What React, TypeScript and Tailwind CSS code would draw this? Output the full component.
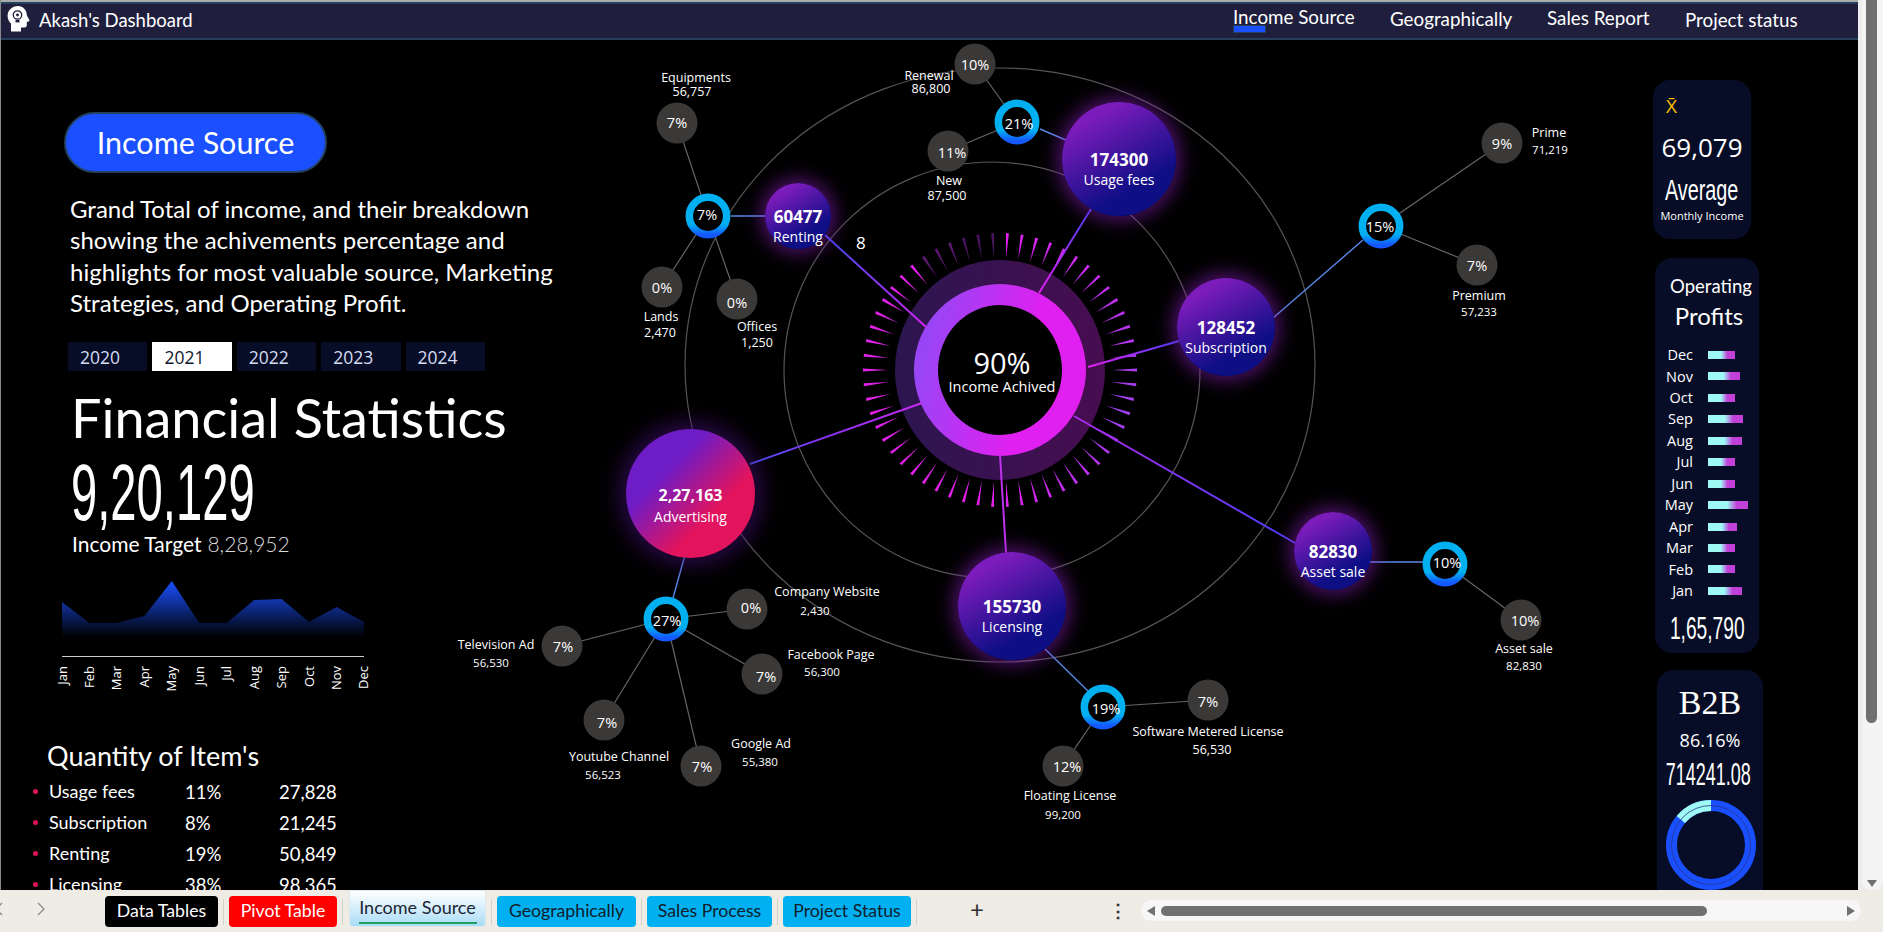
import React from "react";

const years = ["2020", "2021", "2022", "2023", "2024"];
const months = ["Jan", "Feb", "Mar", "Apr", "May", "Jun", "Jul", "Aug", "Sep", "Oct", "Nov", "Dec"];
const areaY = [603, 624, 624, 617, 582, 624, 624, 601, 600, 623, 608, 623];

const items = [
  { name: "Usage fees", pct: "11%", qty: "27,828" },
  { name: "Subscription", pct: "8%", qty: "21,245" },
  { name: "Renting", pct: "19%", qty: "50,849" },
  { name: "Licensing", pct: "38%", qty: "98,365" },
];

const profits = [
  { m: "Dec", w: 27 },
  { m: "Nov", w: 32 },
  { m: "Oct", w: 27 },
  { m: "Sep", w: 35 },
  { m: "Aug", w: 34 },
  { m: "Jul", w: 27 },
  { m: "Jun", w: 27 },
  { m: "May", w: 40 },
  { m: "Apr", w: 29 },
  { m: "Mar", w: 27 },
  { m: "Feb", w: 27 },
  { m: "Jan", w: 34 },
];

// diagram data, coordinates are page pixels
const bubbles = [
  { x: 798, y: 216, r: 33, value: "60477", label: "Renting" },
  { x: 1119, y: 159, r: 57, value: "174300", label: "Usage fees" },
  { x: 1226, y: 327, r: 49, value: "128452", label: "Subscription" },
  { x: 1012, y: 606, r: 54, value: "155730", label: "Licensing" },
  { x: 1333, y: 551, r: 39, value: "82830", label: "Asset sale" },
];

const rings = [
  { x: 1017, y: 122, t: "21%", tx: 1019, ty: 124 },
  { x: 708, y: 216, t: "7%", tx: 707, ty: 215 },
  { x: 1381, y: 226, t: "15%", tx: 1380, ty: 227 },
  { x: 666, y: 619, t: "27%", tx: 667, ty: 621 },
  { x: 1445, y: 564, t: "10%", tx: 1447, ty: 563 },
  { x: 1103, y: 707, t: "19%", tx: 1106, ty: 709 },
];

const dots = [
  { x: 975, y: 64, t: "10%", tx: 975, ty: 65, from: 0 },
  { x: 948, y: 151, t: "11%", tx: 952, ty: 153, from: 0 },
  { x: 677, y: 123, t: "7%", tx: 677, ty: 123, from: 1 },
  { x: 662, y: 287, t: "0%", tx: 662, ty: 288, from: 1 },
  { x: 737, y: 299, t: "0%", tx: 737, ty: 303, from: 1 },
  { x: 1502, y: 143, t: "9%", tx: 1502, ty: 144, from: 2 },
  { x: 1477, y: 265, t: "7%", tx: 1477, ty: 266, from: 2 },
  { x: 747, y: 609, t: "0%", tx: 751, ty: 608, from: 3 },
  { x: 562, y: 646, t: "7%", tx: 563, ty: 647, from: 3 },
  { x: 762, y: 674, t: "7%", tx: 766, ty: 677, from: 3 },
  { x: 604, y: 720, t: "7%", tx: 607, ty: 723, from: 3 },
  { x: 701, y: 766, t: "7%", tx: 702, ty: 767, from: 3 },
  { x: 1521, y: 620, t: "10%", tx: 1525, ty: 621, from: 4 },
  { x: 1208, y: 700, t: "7%", tx: 1208, ty: 702, from: 5 },
  { x: 1063, y: 766, t: "12%", tx: 1067, ty: 767, from: 5 },
];

const labels = [
  { x: 696, y: 78, t: "Equipments", nx: 692, ny: 92, n: "56,757", big: true },
  { x: 929, y: 76, t: "Renewal", nx: 931, ny: 89, n: "86,800", big: true },
  { x: 949, y: 181, t: "New", nx: 947, ny: 196, n: "87,500", big: true },
  { x: 661, y: 317, t: "Lands", nx: 660, ny: 333, n: "2,470", big: true },
  { x: 757, y: 327, t: "Offices", nx: 757, ny: 343, n: "1,250", big: true },
  { x: 1549, y: 133, t: "Prime", nx: 1550, ny: 150, n: "71,219", big: false },
  { x: 1479, y: 296, t: "Premium", nx: 1479, ny: 312, n: "57,233", big: false },
  { x: 827, y: 592, t: "Company Website", nx: 815, ny: 611, n: "2,430", big: false },
  { x: 831, y: 655, t: "Facebook Page", nx: 822, ny: 672, n: "56,300", big: false },
  { x: 761, y: 744, t: "Google Ad", nx: 760, ny: 762, n: "55,380", big: false },
  { x: 619, y: 757, t: "Youtube Channel", nx: 603, ny: 775, n: "56,523", big: false },
  { x: 496, y: 645, t: "Television Ad", nx: 491, ny: 663, n: "56,530", big: false },
  { x: 1208, y: 732, t: "Software Metered License", nx: 1212, ny: 750, n: "56,530", big: true },
  { x: 1070, y: 796, t: "Floating License", nx: 1063, ny: 815, n: "99,200", big: false },
  { x: 1524, y: 649, t: "Asset sale", nx: 1524, ny: 666, n: "82,830", big: false },
];

// center -> bubble spokes
const spokes = [
  [926, 327, 825, 235],
  [1039, 293, 1091, 209],
  [1088, 367, 1179, 341],
  [922, 403, 750, 464],
  [1000, 455, 1006, 553],
  [1074, 416, 1295, 543],
];

// bubble -> ring links
const links = [
  [765, 216, 731, 216],
  [1040, 129, 1068, 141],
  [1273, 318, 1363, 240],
  [685, 555, 673, 598],
  [1364, 562, 1423, 562],
  [1045, 649, 1088, 691],
];

const TICKS = 58;

function mix(a: number[], b: number[], t: number) {
  const c = a.map((v, i) => Math.round(v + (b[i] - v) * t));
  return `rgb(${c[0]},${c[1]},${c[2]})`;
}

function tickColor(deg: number) {
  if (deg > 322) return deg > 340 ? "#4a1560" : "#5a1670";
  const magenta = [224, 32, 240];
  const purple = [160, 64, 240];
  if (deg < 110) return mix(magenta, purple, deg / 110);
  if (deg < 180) return mix(purple, magenta, (deg - 110) / 70);
  return mix(magenta, [224, 32, 232], 1);
}

function Ticks() {
  const out = [];
  for (let i = 0; i < TICKS; i++) {
    const deg = ((90 + (i * 360) / TICKS) % 360 + 360) % 360;
    const a = ((deg - 90) * Math.PI) / 180;
    const cos = Math.cos(a);
    const sin = Math.sin(a);
    const x1 = 1000 + cos * 112;
    const y1 = 370 + sin * 112;
    const x2 = 1000 + cos * 137;
    const y2 = 370 + sin * 137;
    const pts = [
      `${x1},${y1}`,
      `${x2 - sin * 1.5},${y2 + cos * 1.5}`,
      `${x2 + sin * 1.5},${y2 - cos * 1.5}`,
    ].join(" ");
    out.push(<polygon key={i} points={pts} fill={tickColor(deg)} />);
  }
  return <>{out}</>;
}

function Squeezed({ children, className }: { children: React.ReactNode; className: string }) {
  return <span className={`inline-block [font-family:'Liberation_Sans',sans-serif] whitespace-nowrap ${className}`}>{children}</span>;
}

function Diagram() {
  return (
    <div className="absolute left-[-1px] top-[-40px] w-[1858px] h-[932px] [font-family:'Open_Sans',sans-serif] text-white">
      <svg className="absolute inset-0" width="1858" height="932" viewBox="0 0 1858 932" fill="none">
        <defs>
          <linearGradient id="spoke" gradientUnits="userSpaceOnUse" x1="1000" y1="370" x2="1300" y2="545">
            <stop offset="0" stopColor="#d026f0" />
            <stop offset="1" stopColor="#4a3ef5" />
          </linearGradient>
          <linearGradient id="spokeA" x1="0" y1="0" x2="1" y2="0">
            <stop offset="0" stopColor="#4a50f0" />
            <stop offset="0.45" stopColor="#8a30f0" />
            <stop offset="1" stopColor="#c82cf0" />
          </linearGradient>
          <linearGradient id="spokeB" x1="0" y1="1" x2="1" y2="0">
            <stop offset="0" stopColor="#e020f0" />
            <stop offset="1" stopColor="#4a3ef5" />
          </linearGradient>
          <linearGradient id="spokeC" x1="1" y1="1" x2="0" y2="0">
            <stop offset="0" stopColor="#d026f0" />
            <stop offset="1" stopColor="#3c48f0" />
          </linearGradient>
          <linearGradient id="core" x1="0" y1="0" x2="1" y2="0.25">
            <stop offset="0.15" stopColor="#9a45f5" />
            <stop offset="0.75" stopColor="#e020f0" />
          </linearGradient>
          <linearGradient id="halo" x1="0" y1="0" x2="1" y2="0">
            <stop offset="0" stopColor="#2c1650" />
            <stop offset="1" stopColor="#470d50" />
          </linearGradient>
          <linearGradient id="ringStroke" x1="0" y1="0" x2="0" y2="1">
            <stop offset="0.72" stopColor="#00b0f0" />
            <stop offset="1" stopColor="#1458ff" />
          </linearGradient>
        </defs>

        <ellipse cx="1000" cy="365" rx="315" ry="297" stroke="#555" strokeWidth="1.2" />
        <circle cx="992" cy="370" r="208" stroke="#555" strokeWidth="1.2" />

        <Ticks />

        {dots.map((d, i) => (
          <line key={i} x1={rings[d.from].x} y1={rings[d.from].y} x2={d.x} y2={d.y} stroke="#666" strokeWidth="1.2" />
        ))}
        {links.map((l, i) => (
          <line key={i} x1={l[0]} y1={l[1]} x2={l[2]} y2={l[3]} stroke="#5a88e8" strokeWidth="1.4" />
        ))}

        <ellipse cx="1000" cy="370" rx="105" ry="110" fill="url(#halo)" />
        <circle cx="1000" cy="370" r="86" fill="url(#core)" />
        <ellipse cx="1000" cy="370" rx="62" ry="65" fill="#000" />

        <line x1={spokes[0][0]} y1={spokes[0][1]} x2={spokes[0][2]} y2={spokes[0][3]} stroke="url(#spokeC)" strokeWidth="2" />
        <line x1={spokes[1][0]} y1={spokes[1][1]} x2={spokes[1][2]} y2={spokes[1][3]} stroke="url(#spokeB)" strokeWidth="2" />
        <line x1={spokes[2][0]} y1={spokes[2][1]} x2={spokes[2][2]} y2={spokes[2][3]} stroke="url(#spokeB)" strokeWidth="2" />
        <line x1={spokes[3][0]} y1={spokes[3][1]} x2={spokes[3][2]} y2={spokes[3][3]} stroke="url(#spokeA)" strokeWidth="2" />
        <line x1={spokes[4][0]} y1={spokes[4][1]} x2={spokes[4][2]} y2={spokes[4][3]} stroke="#c030f0" strokeWidth="2" />
        <line x1={spokes[5][0]} y1={spokes[5][1]} x2={spokes[5][2]} y2={spokes[5][3]} stroke="url(#spoke)" strokeWidth="2" />

        {rings.map((r, i) => (
          <circle key={i} cx={r.x} cy={r.y} r="18.700" fill="#000" stroke="url(#ringStroke)" strokeWidth="7.500" />
        ))}
        {dots.map((d, i) => (
          <circle key={i} cx={d.x} cy={d.y} r="20.500" fill="#3a3938" />
        ))}
      </svg>

      {bubbles.map((b) => (
        <div
          key={b.label}
          className="absolute -translate-x-1/2 -translate-y-1/2 rounded-full flex flex-col items-center justify-center pt-[21px] bg-linear-[150deg,#7d1cbc_18%,#0e0e85_72%] shadow-[0_0_18px_5px_rgba(140,30,190,0.55)]"
          style={{ left: b.x, top: b.y, width: b.r * 2, height: b.r * 2 }}
        >
          <span className="text-[17px] leading-[20px] font-bold">{b.value}</span>
          <span className="text-[14px] leading-[20px] whitespace-nowrap">{b.label}</span>
        </div>
      ))}

      <div className="absolute left-[626px] top-[429px] w-[129px] h-[129px] rounded-full flex flex-col items-center justify-center pt-[24px] bg-linear-[135deg,#6e1cc6_32%,#e2145e_66%] shadow-[0_0_20px_8px_rgba(70,15,120,0.55)]">
        <span className="text-[16px] leading-[22px] font-bold">2,27,163</span>
        <span className="text-[14px] leading-[22px]">Advertising</span>
      </div>

      {rings.map((r) => (
        <span key={r.x} className="absolute -translate-x-1/2 -translate-y-1/2 text-[14.5px]" style={{ left: r.tx, top: r.ty }}>
          {r.t}
        </span>
      ))}
      {dots.map((d) => (
        <span key={d.x} className="absolute -translate-x-1/2 -translate-y-1/2 text-[14.5px]" style={{ left: d.tx, top: d.ty }}>
          {d.t}
        </span>
      ))}
      {labels.map((l) => (
        <React.Fragment key={l.t}>
          <span className="absolute -translate-x-1/2 -translate-y-1/2 text-[12.5px] leading-none whitespace-nowrap" style={{ left: l.x, top: l.y }}>
            {l.t}
          </span>
          <span
            className={`absolute -translate-x-1/2 -translate-y-1/2 leading-none ${l.big ? "text-[12.5px]" : "text-[11.5px]"}`}
            style={{ left: l.nx, top: l.ny }}
          >
            {l.n}
          </span>
        </React.Fragment>
      ))}

      <span className="absolute left-[856px] top-[230px] text-[17px]">8</span>
      <div className="absolute left-[940px] top-[348px] w-[124px] flex flex-col items-center">
        <span className="text-[29px] leading-[30px]">90%</span>
        <span className="text-[14.5px] leading-[18px] whitespace-nowrap">Income Achived</span>
      </div>
    </div>
  );
}

function LeftPanel() {
  const areaPts = areaY.map((y, i) => `${62 + i * 27.45},${y}`).join(" ");
  return (
    <aside className="relative w-[560px] shrink-0 flex flex-col text-white [font-family:Lato,sans-serif] [&>*]:shrink-0">
      <div className="ml-[63px] mt-[72px] w-[263px] h-[61px] rounded-full bg-[#1a50ff] border-2 border-[#24405c] flex items-center justify-center text-[30.5px]">
        Income Source
      </div>
      <p className="ml-[69px] mt-[20px] text-[24px] leading-[31.3px] w-[490px]">
        Grand Total of income, and their breakdown
        <br />
        showing the achivements percentage and
        <br />
        highlights for most valuable source, Marketing
        <br />
        Strategies, and Operating Profit.
      </p>
      <div className="ml-[67px] mt-[24px] flex gap-[5px]">
        {years.map((y) => (
          <div
            key={y}
            className={`w-[79.4px] h-[29px] pl-[12px] flex items-center text-[17.5px] [font-family:'Open_Sans',sans-serif] ${y === "2021" ? "bg-white text-[#10182f]" : "bg-[#070d26] text-[#d4dcf4]"}`}
          >
            {y}
          </div>
        ))}
      </div>
      <h1 className="ml-[70px] mt-[16px] text-[54px] leading-[62px] font-normal whitespace-nowrap">Financial Statistics</h1>
      <Squeezed className="ml-[70px] mt-[11px] text-[80px] leading-[66px] origin-left scale-x-[0.59]">9,20,129</Squeezed>
      <div className="ml-[71px] mt-[3.500px] flex items-baseline gap-[6px]">
        <span className="text-[21px] leading-[28px]">Income Target</span>
        <span className="text-[21px] leading-[28px] font-light text-[#d8d8d8]">8,28,952</span>
      </div>

      <svg className="ml-[49px] mt-[19px]" width="330" height="116" viewBox="50 578 330 116" fill="none">
        <defs>
          <linearGradient id="area" gradientUnits="userSpaceOnUse" x1="0" y1="582" x2="0" y2="638">
            <stop offset="0" stopColor="#1a50ff" />
            <stop offset="1" stopColor="#000" />
          </linearGradient>
        </defs>
        <polygon points={`62,640 ${areaPts} 364,640`} fill="url(#area)" />
        <line x1="62" y1="657.5" x2="364" y2="657.5" stroke="#ccc" strokeWidth="1" />
        {months.map((m, i) => (
          <text
            key={m}
            transform={`translate(${62 + i * 27.45 + 4.5},667) rotate(-90)`}
            textAnchor="end"
            fill="#fff"
            fontSize="13"
            fontFamily="Open Sans, sans-serif"
          >
            {m}
          </text>
        ))}
      </svg>

      <h2 className="ml-[46px] mt-[46px] text-[27px] leading-[34px] font-normal">Quantity of Item's</h2>
      <ul className="mt-[3.500px]">
        {items.map((it) => (
          <li key={it.name} className="flex items-center h-[31px] text-[18px]">
            <span className="ml-[32px] w-[5px] h-[5px] rounded-full bg-[#e0105a]" />
            <span className="ml-[11px] w-[136px]">{it.name}</span>
            <span className="w-[94px] text-[18.5px] pt-[3px]">{it.pct}</span>
            <span className="text-[18.5px] pt-[3px]">{it.qty}</span>
          </li>
        ))}
      </ul>
    </aside>
  );
}

function RightPanel() {
  return (
    <aside className="relative flex flex-col text-white w-[120px] mr-[85px] shrink-0 [font-family:'Open_Sans',sans-serif] [&>*]:shrink-0">
      <div className="mt-[40px] w-[98px] h-[159px] rounded-[17px] bg-[#070d26] flex flex-col items-center">
        <span className="self-start ml-[13px] mt-[14px] text-[19px] leading-[24px] text-[#ffc000]">X̄</span>
        <span className="mt-[11px] text-[26px] leading-[36px]">69,079</span>
        <Squeezed className="mt-[7px] text-[30px] leading-[36px] scale-x-[0.66]">Average</Squeezed>
        <span className="text-[11px] leading-[16px] whitespace-nowrap">Monthly Income</span>
      </div>

      <div className="ml-[2px] mt-[19px] w-[104px] h-[395px] rounded-[17px] bg-[#070d26] flex flex-col items-center">
        <span className="mt-[14px] ml-[8px] text-[18.5px] leading-[28px] whitespace-nowrap [font-family:Lato,sans-serif]">Operating</span>
        <span className="ml-[4px] text-[24px] leading-[32px] [font-family:Lato,sans-serif]">Profits</span>
        <div className="mt-[12.300px] self-start flex flex-col">
          {profits.map((p) => (
            <div key={p.m} className="flex items-center h-[21.45px]">
              <span className="w-[38px] text-right text-[14.5px]">{p.m}</span>
              <span
                className="ml-[15px] h-[8px] bg-linear-[90deg,#9ef9f5_48%,#c040d8_72%]"
                style={{ width: p.w }}
              />
            </div>
          ))}
        </div>
        <Squeezed className="mt-[9.300px] text-[32px] leading-[34px] scale-x-[0.6]">1,65,790</Squeezed>
      </div>

      <div className="ml-[4px] mt-[17px] w-[106px] h-[240px] rounded-t-[17px] bg-[#070d26] flex flex-col items-center">
        <span className="mt-[14px] text-[34px] leading-[38px] [font-family:'Liberation_Serif',serif]">B2B</span>
        <span className="mt-[5px] text-[18px] leading-[26px]">86.16%</span>
        <Squeezed className="mt-[5px] mr-[3px] text-[31px] leading-[34px] scale-x-[0.58]">714241.08</Squeezed>
        <svg className="mt-[7px] ml-[2px] shrink-0" width="92" height="92" viewBox="-46 -46 92 92" fill="none">
          <circle r="39.500" stroke="#1a4fff" strokeWidth="11" />
          <path d="M0 -45 A45 45 0 0 0 -34.4 -29 L-26 -21.9 A34 34 0 0 1 0 -34 Z" fill="#9ef9f5" />
          <circle r="39.500" stroke="#24358c" strokeWidth="0.8" />
        </svg>
      </div>
    </aside>
  );
}

function HeadIcon() {
  return (
    <svg width="23" height="26" viewBox="0 0 23 26" className="ml-[6px] mt-[-5px] shrink-0">
      <path
        d="M11 0C5 0 .6 4.4.6 10c0 3.2 1.3 5.6 3.4 7.4V25.5h10v-4h3.6c1.3 0 2.2-1 2.2-2.2v-3.4l2.2-.7c.5-.2.7-.7.4-1.2l-2.5-4.4C19.900 4 16 0 11 0z"
        fill="#fff"
      />
      <circle cx="10.500" cy="9" r="4.200" fill="none" stroke="#1f1f3d" strokeWidth="1.3" />
      <circle cx="10.500" cy="9" r="1.400" fill="#1f1f3d" />
      <rect x="8.500" y="14" width="4" height="2.400" fill="#1f1f3d" />
    </svg>
  );
}

function Header() {
  return (
    <header className="h-[34px] border-t-2 border-b-2 border-[#24405c] bg-[#1f1f3d] flex items-center text-white [font-family:Lato,sans-serif] shrink-0 box-content">
      <HeadIcon />
      <span className="ml-[9px] text-[18.5px]">Akash's Dashboard</span>
      <nav className="ml-auto mr-[62px] flex items-center gap-[33px] text-[18.8px]">
        <span className="relative mt-[-8px] w-[124px] whitespace-nowrap">
          Income Source
          <span className="absolute left-0 top-[22px] w-[33px] h-[8px] bg-[#1a4fff] border border-[#24405c]" />
        </span>
        <span className="mt-[-4px] w-[124px] whitespace-nowrap">Geographically</span>
        <span className="mt-[-6px] w-[105px] whitespace-nowrap">Sales Report</span>
        <span className="mt-[-2px] w-[111px] whitespace-nowrap">Project status</span>
      </nav>
    </header>
  );
}

function Sep() {
  return <span className="mx-[5px] mt-[9px] w-px h-[26px] bg-[#d6d2cc]" />;
}

function SheetTabs() {
  return (
    <div className="h-[42px] bg-[#efebe5] flex items-start relative [font-family:Lato,sans-serif] text-[17.7px] [&>*]:shrink-0 shrink-0">
      <svg className="ml-[-6px] mt-[11px]" width="10" height="16" viewBox="0 0 10 16" fill="none" stroke="#8a8a8a" strokeWidth="1.3"><path d="M8 2l-6 6 6 6" /></svg>
      <svg className="ml-[32px] mt-[11px]" width="10" height="16" viewBox="0 0 10 16" fill="none" stroke="#8a8a8a" strokeWidth="1.3"><path d="M2 2l6 6-6 6" /></svg>
      <div className="ml-[59px] mt-[6px] w-[113px] h-[31px] rounded-[4px] bg-black text-white flex items-center justify-center">Data Tables</div>
      <Sep />
      <div className="w-[108px] mt-[6px] h-[31px] rounded-[4px] bg-[#ff0000] text-white flex items-center justify-center">Pivot Table</div>
      <Sep />
      <div className="w-[137px] ml-[1px] h-[37px] rounded-b-[4px] bg-linear-to-b from-white to-[#a8dcf6] text-[#1c2433] flex flex-col items-center border border-[#dfe8ee]">
        <span className="mt-[5px] leading-[22px] text-[18px]">Income Source</span>
        <span className="mt-[4px] w-[118px] h-[2px] bg-[#1f9e5f]" />
      </div>
      <Sep />
      <div className="w-[139px] mt-[6px] h-[31px] rounded-[4px] bg-[#00b0f0] text-[#10202c] flex items-center justify-center">Geographically</div>
      <Sep />
      <div className="w-[125px] mt-[6px] h-[31px] rounded-[4px] bg-[#00b0f0] text-[#10202c] flex items-center justify-center">Sales Process</div>
      <Sep />
      <div className="w-[128px] mt-[6px] h-[31px] rounded-[4px] bg-[#00b0f0] text-[#10202c] flex items-center justify-center">Project Status</div>
      <Sep />
      <span className="ml-[48px] mt-[5px] text-[24px] leading-[28px] text-[#333]">+</span>
      <span className="ml-[125px] mt-[9px] text-[18px] leading-[22px] font-bold text-[#333]">⋮</span>
      <div className="ml-auto mr-[22px] mt-[10px] w-[720px] h-[21px] rounded-full bg-[#f6f6f6] flex items-center px-[6px]">
        <span className="w-0 h-0 border-y-[5px] border-y-transparent border-r-[8px] border-r-[#707070]" />
        <span className="ml-[6px] w-[546px] h-[10px] rounded-full bg-[#707070]" />
        <span className="ml-auto w-0 h-0 border-y-[5px] border-y-transparent border-l-[8px] border-l-[#707070]" />
      </div>
    </div>
  );
}

function VScroll() {
  return (
    <div className="w-[25px] shrink-0 bg-[#ececec] flex justify-end">
      <div className="w-[21px] h-full bg-[#f4f4f4] rounded-b-[8px] flex flex-col items-start pl-[4px]">
        <span className="w-[11px] h-[723px] rounded-b-full bg-[#707070] shrink-0" />
        <span className="mt-auto mb-[3px] ml-[1px] w-0 h-0 border-x-[5px] border-x-transparent border-t-[7px] border-t-[#707070]" />
      </div>
    </div>
  );
}

export default function App() {
  return (
    <div className="w-[1883px] h-[932px] overflow-hidden flex flex-col bg-black">
      <div className="flex-1 min-h-0 flex">
        <div className="w-[1858px] shrink-0 flex flex-col border-l border-[#888]">
          <div className="h-[2px] bg-[#aaa] shrink-0" />
          <Header />
          <main className="relative flex-1 min-h-0 overflow-hidden bg-black flex justify-between">
            <Diagram />
            <LeftPanel />
            <RightPanel />
          </main>
        </div>
        <VScroll />
      </div>
      <SheetTabs />
    </div>
  );
}
